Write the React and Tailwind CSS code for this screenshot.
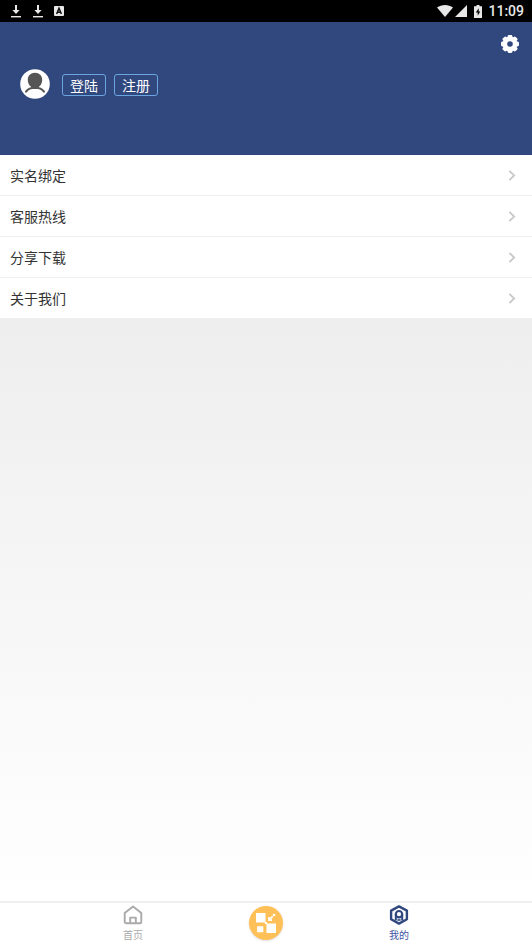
import React, { useState } from "react";

const menuItems = [
  { label: "实名绑定", href: "#verify" },
  { label: "客服热线", href: "#hotline" },
  { label: "分享下载", href: "#share" },
  { label: "关于我们", href: "#about" },
];

function DownloadIcon() {
  return (
    <svg viewBox="0 0 12 14" className="w-3 h-3.5" fill="#e8e8e8">
      <path d="M5 1h2v5h2.6L6 10 2.4 6H5z" />
      <path d="M1 12h10v1.4H1z" />
    </svg>
  );
}

function StatusBar() {
  return (
    <div className="h-[22px] bg-black flex items-center justify-between pl-2.5 pr-2 text-[#e8e8e8]">
      <div className="flex items-center gap-2.5">
        <DownloadIcon />
        <DownloadIcon />
        <svg viewBox="0 0 10 10" className="w-2.5 h-2.5">
          <rect width="10" height="10" rx="1" fill="#e8e8e8" />
          <path d="M2.6 8 5 2.2 7.4 8M3.6 6.2h2.8" stroke="#111" strokeWidth="1.5" fill="none" />
        </svg>
      </div>
      <div className="flex items-center">
        <svg viewBox="0 0 16 12" className="w-4 h-3" fill="#e8e8e8">
          <path d="M0 2.6C4.6-.8 11.4-.8 16 2.6L8 12z" />
        </svg>
        <svg viewBox="0 0 12 12" className="w-3 h-3 ml-0.5" fill="#e8e8e8">
          <path d="M12 0v12H0z" />
        </svg>
        <svg viewBox="0 0 8 13" className="w-2 h-[13px] ml-[7px]">
          <path d="M2.5 0h3v1.3H8V13H0V1.3h2.5z" fill="#e8e8e8" />
          <path d="M4.7 3.2 1.8 7.6h1.9v3.2l2.6-4.4H4.7z" fill="#000" />
        </svg>
        <span className="ml-1.5 text-sm leading-none font-medium font-[Roboto,sans-serif]">11:09</span>
      </div>
    </div>
  );
}

function GearIcon() {
  return (
    <svg viewBox="0 0 18 18" className="w-[18px] h-[18px]">
      <g fill="#fff">
        <circle cx="9" cy="9" r="7.4" />
        <rect x="6.6" y="0" width="4.8" height="18" rx="1.4" />
        <rect x="6.6" y="0" width="4.8" height="18" rx="1.4" transform="rotate(45 9 9)" />
        <rect x="6.6" y="0" width="4.8" height="18" rx="1.4" transform="rotate(90 9 9)" />
        <rect x="6.6" y="0" width="4.8" height="18" rx="1.4" transform="rotate(135 9 9)" />
      </g>
      <circle cx="9" cy="9" r="2.8" fill="#31487f" />
    </svg>
  );
}

function Avatar() {
  return (
    <svg viewBox="0 0 30 30" className="w-[30px] h-[30px]">
      <circle cx="15" cy="15" r="14.8" fill="#fff" />
      <path d="M15 3.8c4.4 0 7.2 2.9 7.2 7.1 0 2.9-1.2 5.2-3.1 6.7-.2 1.4-2 2.4-4.1 2.4s-3.9-1-4.1-2.4c-1.9-1.5-3.1-3.8-3.1-6.7 0-4.2 2.8-7.1 7.2-7.1z" fill="#555" />
      <path d="M6 22.6c1.8-2.6 4.6-3.8 9-3.8s7.2 1.2 9 3.8" fill="none" stroke="#555" strokeWidth="2" strokeLinecap="round" />
    </svg>
  );
}

function Header() {
  return (
    <header className="bg-[#31487f] pt-[13px] pb-14">
      <div className="flex justify-end pr-[13px]">
        <button aria-label="设置" className="cursor-pointer">
          <GearIcon />
        </button>
      </div>
      <div className="flex items-center pl-5 pt-4">
        <Avatar />
        <div className="flex gap-2 ml-3 pt-0.5 text-sm text-white">
          <button className="h-[22px] w-11 flex items-center justify-center border border-[#6ba6e0] rounded-[3px] cursor-pointer">登陆</button>
          <button className="h-[22px] w-11 flex items-center justify-center border border-[#6ba6e0] rounded-[3px] cursor-pointer">注册</button>
        </div>
      </div>
    </header>
  );
}

function MenuList() {
  return (
    <ul className="bg-white">
      {menuItems.map((item) => (
        <li key={item.href} className="border-b border-[#efefef]">
          <a href={item.href} className="h-10 flex items-center justify-between pl-2.5 pr-4 text-sm text-[#333]">
            <span>{item.label}</span>
            <svg viewBox="0 0 8 12" className="w-2 h-3" fill="none" stroke="#c8c8c8" strokeWidth="1.8">
              <path d="M1.4 1.8 6.2 6.5 1.4 11.2" />
            </svg>
          </a>
        </li>
      ))}
    </ul>
  );
}

function HomeIcon() {
  return (
    <svg viewBox="0 0 20 20" className="w-5 h-5" fill="none" stroke="currentColor" strokeWidth="1.9" strokeLinejoin="round">
      <path d="M1.7 8 10 1.4 18.3 8v8.4c0 1.2-.7 1.9-1.9 1.9H3.6c-1.2 0-1.9-.7-1.9-1.9z" />
      <path d="M7.2 18v-5.4h5.6V18" />
    </svg>
  );
}

function MineIcon() {
  return (
    <svg viewBox="0 0 20 20" className="w-5 h-5" fill="none" stroke="#31487f" strokeLinejoin="round">
      <path d="M10 1.4 17.9 5.6v8.6L10 18.6 2.1 14.2V5.6z" strokeWidth="2.4" />
      <circle cx="10" cy="9.2" r="3.2" strokeWidth="2.2" />
      <path d="M6.8 9.6v6M13.2 9.6v6" strokeWidth="2" />
      <path d="M8.4 15h3.2" strokeWidth="1.6" />
    </svg>
  );
}

function TabBar() {
  const [tab, setTab] = useState("mine");
  const color = (name) => (tab === name ? "text-[#3f55a5]" : "text-[#aaa]");

  return (
    <nav className="bg-white border-t-2 border-[#efefef] h-[45px] px-[12.5%] grid grid-cols-3 text-[10px] leading-4">
      <button onClick={() => setTab("home")} className={`flex flex-col items-center justify-start gap-0.5 pt-0.5 cursor-pointer ${color("home")}`}>
        <HomeIcon />
        <span>首页</span>
      </button>
      <button aria-label="应用" className="flex items-start justify-center pt-[3px] cursor-pointer">
        <span className="w-[34px] h-[34px] rounded-full bg-[#ffc057] shadow-sm flex items-center justify-center">
          <svg viewBox="0 0 18 18" className="w-5 h-5" fill="#fff">
            <path d="M0 0h8.6v8.6H0zM9.4 9.4H18V18H9.4zM8 8h2v2H8zM1 12h5.6v5.4H1z" />
            <path d="M11.6 3.6v2.8h2.8M12 6l3-3" fill="none" stroke="#fff" strokeWidth="1.4" />
            <circle cx="16.2" cy="1.8" r="1.2" />
          </svg>
        </span>
      </button>
      <button onClick={() => setTab("mine")} className={`flex flex-col items-center justify-start gap-0.5 pt-0.5 cursor-pointer ${color("mine")}`}>
        <MineIcon />
        <span>我的</span>
      </button>
    </nav>
  );
}

export default function App() {
  return (
    <div lang="zh-CN" className="min-h-screen flex flex-col bg-white font-['Noto_Sans_CJK_SC',sans-serif]">
      <StatusBar />
      <Header />
      <MenuList />
      <main className="flex-1 bg-gradient-to-b from-[#eeeeee] to-white" />
      <TabBar />
    </div>
  );
}
